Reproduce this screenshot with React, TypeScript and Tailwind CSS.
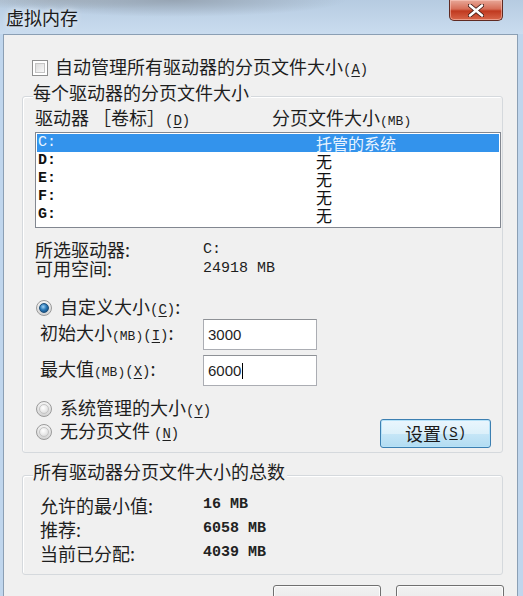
import React from "react";

const cjk = { fontFamily: '"Noto Sans CJK SC", "Noto Sans", sans-serif' };
const mono = { fontFamily: '"Liberation Mono", "DejaVu Sans Mono", monospace' };

function Mn({ c }: { c: string }) {
  return (
    <span className="text-[14px]" style={mono}>
      (<span className="underline underline-offset-2">{c}</span>)
    </span>
  );
}

function Radio({ on }: { on?: boolean }) {
  return (
    <span className="w-[16px] h-[16px] rounded-full shrink-0 flex items-center justify-center border border-[#9a9a9a] bg-[linear-gradient(180deg,#f4f4f4,#d4d4d4)]">
      <span
        className={
          on
            ? "w-[10px] h-[10px] rounded-full bg-[radial-gradient(circle_at_40%_35%,#9fd3f5_0%,#2a78b8_45%,#0d3f6b_100%)] border border-[#1d4f7a]"
            : "w-[10px] h-[10px] rounded-full bg-[radial-gradient(circle_at_40%_35%,#ffffff_0%,#e6e6e6_60%,#cfcfcf_100%)] border border-[#c4c4c4]"
        }
      />
    </span>
  );
}

function Win7Button() {
  return (
    <div className="w-[108px] h-[29px] rounded-[3px] border border-[#707070] shadow-[inset_0_0_0_1px_#fcfcfc] bg-[linear-gradient(180deg,#f2f2f2_0%,#ebebeb_50%,#dddddd_51%,#cfcfcf_100%)]" />
  );
}

export default function App() {
  const drives = [
    { d: "C:", v: "托管的系统", sel: true },
    { d: "D:", v: "无" },
    { d: "E:", v: "无" },
    { d: "F:", v: "无" },
    { d: "G:", v: "无" },
  ];
  return (
    <div
      className="w-[523px] h-[596px] overflow-hidden flex flex-col bg-[#c0d6ed] text-[#1e1e1e]"
      style={cjk}
    >
      {/* Title bar */}
      <div className="h-[34px] shrink-0 flex items-start justify-between bg-[radial-gradient(ellipse_at_33%_0%,#97a5b4_0%,rgba(151,165,180,0)_35%),radial-gradient(ellipse_at_12%_0%,#a9b6c3_0%,rgba(169,182,195,0)_20%),linear-gradient(180deg,#b6cbe1_0%,#cadcef_100%)]">
        <div className="pl-[6px] pt-[6px] text-[18px] leading-[22px] text-[#1b1b1b] [text-shadow:0_0_6px_#ffffff]">
          虚拟内存
        </div>
        <div className="mr-[20px] w-[54px] h-[21px] rounded-b-[5px] border border-t-0 border-[#5f2a22] flex items-center justify-center bg-[linear-gradient(180deg,#e8a898_0%,#d66d57_45%,#c0391f_55%,#d8664a_100%)] shadow-[inset_0_0_0_1px_rgba(255,210,200,0.5)]">
          <svg width="16" height="13" viewBox="0 0 16 13">
            <path
              d="M2 1.5 L14 11.5 M14 1.5 L2 11.5"
              stroke="#3b1510"
              strokeWidth="4.2"
              strokeLinecap="round"
            />
            <path
              d="M2 1.5 L14 11.5 M14 1.5 L2 11.5"
              stroke="#ffffff"
              strokeWidth="2.6"
              strokeLinecap="round"
            />
          </svg>
        </div>
      </div>

      {/* Panel */}
      <div className="flex-1 pl-[3px] pr-[5px] flex">
        <div className="flex-1 border border-b-0 border-[#8b9fb4] bg-[#f0f0f0] flex flex-col">
          {/* Checkbox row */}
          <div className="mt-[22px] ml-[28px] h-[22px] flex items-center gap-[7px] text-[18px] leading-[22px]">
            <span className="w-[16px] h-[16px] border border-[#8e8f8f] bg-white p-[2px]">
              <span className="block w-full h-full border border-[#c4c4c4] bg-[linear-gradient(135deg,#dcdcdc,#f8f8f8)]" />
            </span>
            <span>
              自动管理所有驱动器的分页文件大小<Mn c="A" />
            </span>
          </div>

          {/* Group 1 */}
          <div className="mt-[17px] ml-[18px] w-[481px] border border-[#d5d9dd] rounded-[3px] shadow-[inset_1px_1px_0_#ffffff] flex flex-col pb-[4px]">
            <div className="-mt-[16px] ml-[10px] w-fit pr-[2px] bg-[#f0f0f0] text-[18px] leading-[22px]">
              每个驱动器的分页文件大小
            </div>
            <div className="mt-[3px] pl-[12px] h-[22px] flex text-[18px] leading-[22px]">
              <div className="w-[237px]">
                驱动器 ［卷标］<Mn c="D" />
              </div>
              <div>
                分页文件大小<span className="text-[13px]" style={mono}>(MB)</span>
              </div>
            </div>
            <div className="mt-[4px] ml-[12px] w-[466px] h-[96px] border border-[#828790] bg-white p-[1px]">
              {drives.map((r) => (
                <div
                  key={r.d}
                  className={
                    "h-[18px] flex items-center text-[16px] leading-[18px] " +
                    (r.sel ? "bg-[#3393ec] text-[#e8f3ff]" : "text-[#111]")
                  }
                >
                  <div
                    className={"w-[279px] pl-[1px] text-[15px] " + (r.sel ? "" : "font-bold")}
                    style={mono}
                  >
                    {r.d}
                  </div>
                  <div className="leading-[18px]">{r.v}</div>
                </div>
              ))}
            </div>

            <div className="mt-[12px] pl-[12px] flex flex-col text-[18px] leading-[19px]">
              <div className="flex">
                <div className="w-[168px]">所选驱动器:</div>
                <div className="text-[15px]" style={mono}>C:</div>
              </div>
              <div className="flex">
                <div className="w-[168px]">可用空间:</div>
                <div className="text-[15px]" style={mono}>24918 MB</div>
              </div>
            </div>

            <div className="mt-[19px] pl-[13px] h-[22px] flex items-center gap-[8px] text-[18px] leading-[22px]">
              <Radio on />
              <span>
                自定义大小<Mn c="C" />:
              </span>
            </div>

            <div className="pl-[17px] h-[31px] flex items-center text-[18px] leading-[22px]">
              <div className="w-[163px]">
                初始大小<span className="text-[13px]" style={mono}>(MB)</span>
                <Mn c="I" />:
              </div>
              <div
                className="w-[114px] h-[31px] border border-[#abadb3] border-t-[#8e9196] bg-white flex items-center pl-[4px] text-[15px]"
                style={{ fontFamily: '"Liberation Sans", Arial, sans-serif' }}
              >
                3000
              </div>
            </div>
            <div className="mt-[5px] pl-[17px] h-[31px] flex items-center text-[18px] leading-[22px]">
              <div className="w-[163px]">
                最大值<span className="text-[13px]" style={mono}>(MB)</span>
                <Mn c="X" />:
              </div>
              <div
                className="w-[114px] h-[31px] border border-[#abadb3] border-t-[#8e9196] bg-white flex items-center pl-[4px] text-[15px]"
                style={{ fontFamily: '"Liberation Sans", Arial, sans-serif' }}
              >
                6000<span className="ml-[1px] w-[1px] h-[16px] bg-black" />
              </div>
            </div>

            <div className="mt-[12px] pl-[13px] pr-[11px] flex">
              <div className="flex flex-col text-[18px] leading-[22px]">
                <div className="h-[22px] flex items-center gap-[8px]">
                  <Radio />
                  <span>
                    系统管理的大小<Mn c="Y" />
                  </span>
                </div>
                <div className="h-[24px] flex items-center gap-[8px]">
                  <Radio />
                  <span>
                    无分页文件 <Mn c="N" />
                  </span>
                </div>
              </div>
              <div className="ml-auto mt-[21px]">
                <div className="w-[111px] h-[29px] rounded-[3px] flex items-center justify-center text-[18px] text-[#1a1a1a] border border-[#3c7fb1] shadow-[inset_0_0_0_1px_#b6e2f8] bg-[linear-gradient(180deg,#eaf6fd_0%,#dcf0fa_50%,#c6e6f7_51%,#b2dcf2_100%)]">
                  设置<Mn c="S" />
                </div>
              </div>
            </div>
          </div>

          {/* Group 2 */}
          <div className="mt-[22px] ml-[18px] w-[481px] border border-[#d5d9dd] rounded-[3px] shadow-[inset_1px_1px_0_#ffffff] flex flex-col pb-[9px]">
            <div className="-mt-[16px] ml-[10px] w-fit pr-[2px] bg-[#f0f0f0] text-[18px] leading-[22px]">
              所有驱动器分页文件大小的总数
            </div>
            <div className="mt-[11px] pl-[17px] flex flex-col text-[18px] leading-[24px]">
              {[
                ["允许的最小值:", "16 MB"],
                ["推荐:", "6058 MB"],
                ["当前已分配:", "4039 MB"],
              ].map(([k, v]) => (
                <div key={k} className="flex h-[24px] items-center">
                  <div className="w-[163px]">{k}</div>
                  <div className="text-[15px] font-bold text-[#222]" style={mono}>
                    {v}
                  </div>
                </div>
              ))}
            </div>
          </div>

          {/* Bottom buttons (cut off by the screenshot edge) */}
          <div className="mt-[10px] mr-[13px] flex justify-end gap-[15px]">
            <Win7Button />
            <Win7Button />
          </div>
        </div>
      </div>
    </div>
  );
}
